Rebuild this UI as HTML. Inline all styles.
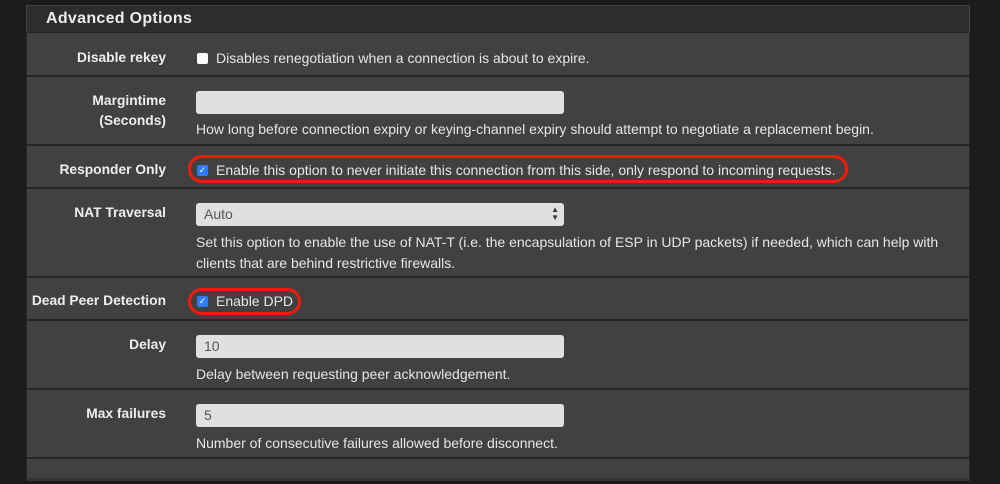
<!DOCTYPE html>
<html><head><style>
body{margin:0;width:1000px;height:484px;background:#1b1b1b;font-family:"Liberation Sans",sans-serif;font-size:14px;color:#e6e6e6;position:relative;overflow:hidden}
.panel{position:absolute;left:26px;top:5px;width:944px;height:476px;background:#414141;border:1px solid #2a2a2a;box-sizing:border-box}
.hdr{position:absolute;left:26px;top:5px;width:944px;height:28px;background:#2d2d2d;border:1px solid #444;border-bottom:1px solid #222;box-sizing:border-box;font-weight:bold;font-size:16px;color:#eee;padding:4px 0 0 19px;letter-spacing:.3px}
.sep{position:absolute;left:26px;width:944px;height:2px;background:#262626}
.lbl{position:absolute;right:834px;font-weight:bold;text-align:right;line-height:20px;color:#eee;font-size:13.8px}
.t{position:absolute;left:196px;white-space:nowrap;line-height:21px}
.inp{position:absolute;left:196px;width:368px;height:23px;background:#e0e0e0;border-radius:3px;color:#555;box-sizing:border-box;padding:3px 8px;font-size:14px}
.cb{position:absolute;left:197px;width:11px;height:11px;border-radius:2px;background:#fff}
.cb.on{background:#2f7cf6;color:#fff;font-size:9px;line-height:11px;text-align:center}
.oval{position:absolute;border:3px solid #f21b0b;border-radius:14px;box-sizing:border-box}
</style></head><body>
<div class="panel"></div>
<div class="hdr">Advanced Options</div>
<div class="sep" style="top:75px"></div>
<div class="sep" style="top:144px"></div>
<div class="sep" style="top:187px"></div>
<div class="sep" style="top:276px"></div>
<div class="sep" style="top:319px"></div>
<div class="sep" style="top:388px"></div>
<div class="sep" style="top:457px"></div>
<div class="sep" style="top:478px;height:3px;background:#333"></div>

<div class="lbl" style="top:48px">Disable rekey</div>
<div class="cb" style="top:53px"></div>
<div class="t" style="left:216px;top:48px">Disables renegotiation when a connection is about to expire.</div>

<div class="lbl" style="top:91px">Margintime<br>(Seconds)</div>
<div class="inp" style="top:91px"></div>
<div class="t" style="top:119px">How long before connection expiry or keying-channel expiry should attempt to negotiate a replacement begin.</div>

<div class="lbl" style="top:160px">Responder Only</div>
<div class="oval" style="left:188px;top:155px;width:660px;height:28px"></div>
<div class="cb on" style="top:165px">✓</div>
<div class="t" style="left:216px;top:160px">Enable this option to never initiate this connection from this side, only respond to incoming requests.</div>

<div class="lbl" style="top:203px">NAT Traversal</div>
<div class="inp" style="top:203px">Auto<span style="position:absolute;right:5px;top:3px;font-size:8px;line-height:8px;color:#333">▲<br>▼</span></div>
<div class="t" style="top:232px">Set this option to enable the use of NAT-T (i.e. the encapsulation of ESP in UDP packets) if needed, which can help with<br>clients that are behind restrictive firewalls.</div>

<div class="lbl" style="top:291px">Dead Peer Detection</div>
<div class="oval" style="left:188px;top:288px;width:113px;height:27px"></div>
<div class="cb on" style="top:296px">✓</div>
<div class="t" style="left:216px;top:291px">Enable DPD</div>

<div class="lbl" style="top:335px">Delay</div>
<div class="inp" style="top:335px">10</div>
<div class="t" style="top:364px">Delay between requesting peer acknowledgement.</div>

<div class="lbl" style="top:404px">Max failures</div>
<div class="inp" style="top:404px">5</div>
<div class="t" style="top:433px">Number of consecutive failures allowed before disconnect.</div>
</body></html>
